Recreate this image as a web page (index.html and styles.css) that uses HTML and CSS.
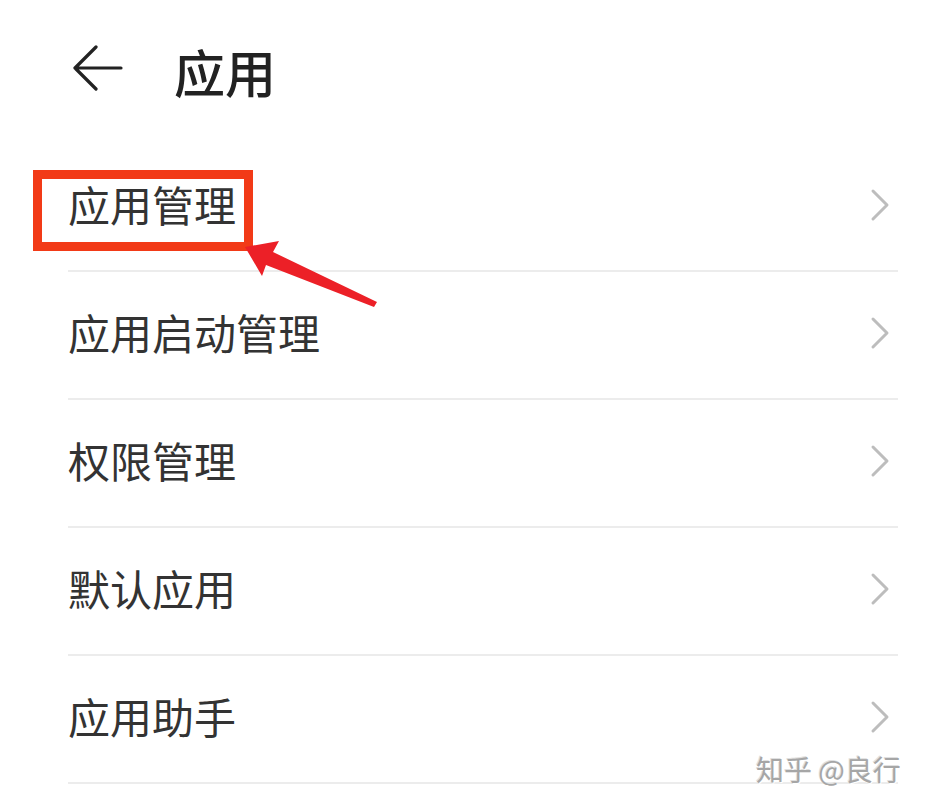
FILE: index.html
```html
<!DOCTYPE html>
<html lang="zh-CN">
<head>
<meta charset="utf-8">
<title>应用</title>
<link rel="stylesheet" href="styles.css">
</head>
<body>
<div class="screen">
  <header class="header">
    <svg class="back" width="52" height="52" viewBox="0 0 52 52" aria-hidden="true">
      <path d="M49 23 H3 M24 2 L3 23 L24 44" fill="none" stroke="#222" stroke-width="3.2" stroke-linecap="round" stroke-linejoin="round"/>
    </svg>
    <h1 class="title">应用</h1>
  </header>
  <ul class="list">
    <li class="row"><span class="label">应用管理</span><svg class="chev" width="22" height="34" viewBox="0 0 22 34"><path d="M3 3 L17 17 L3 31" fill="none" stroke="#bdbdbd" stroke-width="3" stroke-linecap="round" stroke-linejoin="round"/></svg></li>
    <li class="row"><span class="label">应用启动管理</span><svg class="chev" width="22" height="34" viewBox="0 0 22 34"><path d="M3 3 L17 17 L3 31" fill="none" stroke="#bdbdbd" stroke-width="3" stroke-linecap="round" stroke-linejoin="round"/></svg></li>
    <li class="row"><span class="label">权限管理</span><svg class="chev" width="22" height="34" viewBox="0 0 22 34"><path d="M3 3 L17 17 L3 31" fill="none" stroke="#bdbdbd" stroke-width="3" stroke-linecap="round" stroke-linejoin="round"/></svg></li>
    <li class="row"><span class="label">默认应用</span><svg class="chev" width="22" height="34" viewBox="0 0 22 34"><path d="M3 3 L17 17 L3 31" fill="none" stroke="#bdbdbd" stroke-width="3" stroke-linecap="round" stroke-linejoin="round"/></svg></li>
    <li class="row"><span class="label">应用助手</span><svg class="chev" width="22" height="34" viewBox="0 0 22 34"><path d="M3 3 L17 17 L3 31" fill="none" stroke="#bdbdbd" stroke-width="3" stroke-linecap="round" stroke-linejoin="round"/></svg></li>
  </ul>
  <div class="highlight"></div>
  <svg class="pointer" width="160" height="90" viewBox="0 0 160 90" aria-hidden="true">
    <polygon points="3,7 37,1 31,12 135,62 132,67 24,25 20,36" fill="#ec2027"/>
  </svg>
  <div class="watermark">知乎 @良行</div>
</div>
</body>
</html>
```
FILE: styles.css
```css
html, body {
  margin: 0;
  padding: 0;
  background: #ffffff;
}
body {
  font-family: "Noto Sans CJK SC", "Noto Sans", sans-serif;
}
.screen {
  position: relative;
  width: 925px;
  height: 809px;
  overflow: hidden;
  background: #ffffff;
}
.header {
  height: 144px;
  box-sizing: border-box;
  display: flex;
  align-items: center;
  padding: 0 0 0 72px;
  gap: 50px;
}
.back {
  display: block;
  flex: none;
  margin-top: -2px;
}
.title {
  margin: 0;
  font-size: 51px;
  font-weight: 500;
  color: #222222;
  line-height: 1;
  margin-top: -2px;
}
.list {
  list-style: none;
  margin: 0;
  padding: 0 27px 0 68px;
}
.row {
  height: 128px;
  box-sizing: border-box;
  border-bottom: 2px solid #ececec;
  display: flex;
  align-items: center;
  justify-content: space-between;
  padding-right: 6px;
}
.label {
  font-size: 42px;
  color: #333333;
  line-height: 1;
  margin-top: -6px;
}
.chev {
  display: block;
  margin-top: -4px;
}
.highlight {
  position: absolute;
  left: 33px;
  top: 170px;
  width: 220px;
  height: 81px;
  box-sizing: border-box;
  border: 9px solid #f23a17;
}
.pointer {
  position: absolute;
  left: 242px;
  top: 240px;
}
.watermark {
  position: absolute;
  left: 756px;
  top: 749px;
  font-size: 28px;
  color: #a6a6a6;
  text-shadow: 1px 1px 0 #ffffff, -1px -1px 0 #e0e0e0;
  white-space: nowrap;
}
```
